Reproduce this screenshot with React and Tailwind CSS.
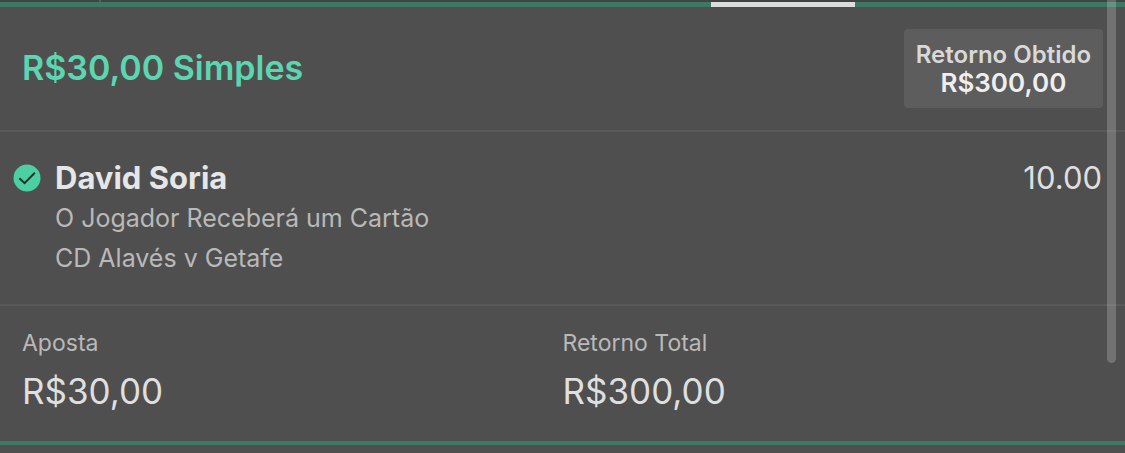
function WonIcon() {
  return (
    <svg viewBox="0 0 28 28" className="h-7 w-7 shrink-0" role="img" aria-label="Ganha">
      <circle cx="14" cy="14" r="13.5" fill="#4bcfa3" />
      <path d="M6.4 14.2 L11.6 19.2 L21.8 8.8" fill="none" stroke="#15322a" strokeWidth="2" />
    </svg>
  );
}

function Amount({ label, value }) {
  return (
    <div className="flex flex-col gap-2">
      <dt className="text-[23px] leading-8 text-[#b9b9b9]">{label}</dt>
      <dd className="text-[35px] leading-12 text-[#dfdfdf]">{value}</dd>
    </div>
  );
}

export default function App() {
  return (
    <main className="relative min-h-screen bg-[#4f4f4f] font-['Inter','Liberation_Sans',sans-serif]">
      <div className="h-[2px] bg-[#404442] pl-[99px]">
        <div className="h-[2px] w-[2px] bg-[#5a5f5c]" />
      </div>
      <div className="grid h-[5px] grid-cols-[711fr_144fr_270fr] bg-[#3f7862]">
        <div className="col-start-2 bg-[#dcdedd]" />
      </div>

      <article className="border-b-4 border-[#3f7862]">
        <header className="flex items-start justify-between border-b-2 border-[#5a5a5a] px-[22px] py-[22px]">
          <h1 className="pt-[15px] text-[34px] leading-12 font-semibold text-[#5cd6b0]">R$30,00 Simples</h1>
          <div className="rounded-[4px] bg-[#5d5d5d] px-3 pt-3 pb-[11px] text-center font-semibold">
            <p className="text-[24px] leading-7 text-[#d9d9d9]">Retorno Obtido</p>
            <p className="text-[26px] leading-7 text-[#efefef]">R$300,00</p>
          </div>
        </header>

        <section className="flex items-start gap-[14px] border-b-2 border-[#5a5a5a] pt-[26px] pr-[23px] pb-[26px] pl-[13px]">
          <div className="flex h-10 items-center">
            <WonIcon />
          </div>
          <div className="grow">
            <h2 className="text-[31px] leading-10 font-bold text-[#e6e6e6]">David Soria</h2>
            <p className="text-[25px] leading-10 text-[#b9b9b9]">O Jogador Receberá um Cartão</p>
            <p className="text-[25px] leading-10 text-[#b9b9b9]">CD Alavés v Getafe</p>
          </div>
          <p className="text-[31px] leading-10 text-[#dfdfdf]">10.00</p>
        </section>

        <dl className="grid grid-cols-2 px-[22px] pt-[21px] pb-[26px]">
          <Amount label="Aposta" value="R$30,00" />
          <Amount label="Retorno Total" value="R$300,00" />
        </dl>
      </article>

      <div className="absolute top-0 right-[9px] h-[363px] w-[9px] rounded-b-full bg-white/20" />
    </main>
  );
}
